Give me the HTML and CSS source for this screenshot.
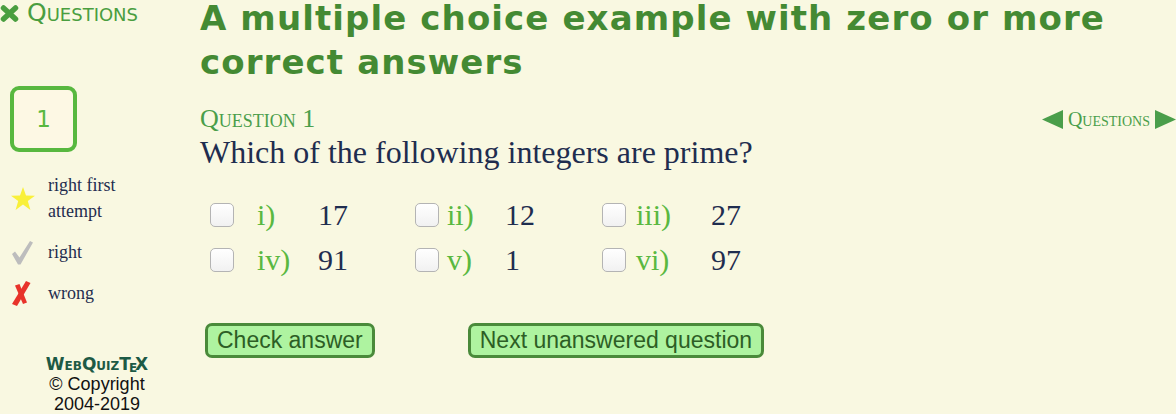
FILE: index.html
```html
<!DOCTYPE html>
<html lang="en">
<head>
<meta charset="UTF-8">
<meta name="viewport" content="width=device-width, initial-scale=1.0">
<title>A multiple choice example</title>
<link rel="stylesheet" href="styles.css">
</head>
<body>

<div class="page">
    <div class="sidebar">
        <div class="side-title">
            <svg width="19" height="17" viewBox="0 0 19 17"><path d="M3.5 3 L15.5 14 M15.5 3 L3.5 14" stroke="#4a9e3f" stroke-width="5.5" stroke-linecap="round"/></svg>
            <span>Questions</span>
        </div>

        <div class="qbox">1</div>

        <div class="legend">
            <svg class="mark" width="24" height="23" viewBox="0 0 24 23">
                <polygon points="12,0 15,8.5 24,8.7 16.8,14 19.4,23 12,17.6 4.6,23 7.2,14 0,8.7 9,8.5" fill="#f9f03a"/>
            </svg>
            <span class="legend-text">right first attempt</span>
            <svg class="mark" width="22" height="25" viewBox="0 0 22 25">
                <path d="M1 14 L4 11.5 L8.5 17.5 L19 1 L22 2.5 L9.5 24.5 L7 24.5 Z" fill="#bdbdbd"/>
            </svg>
            <span class="legend-text">right</span>
            <svg class="mark" width="20" height="25" viewBox="0 0 20 25">
                <path d="M15 0 L19.5 2 L6 25 L1 23 Z" fill="#e8332a"/>
                <path d="M4 4.5 L8.5 3 L16 21.5 L12 23 Z" fill="#e8332a"/>
            </svg>
            <span class="legend-text">wrong</span>
        </div>

        <div class="footer">
            <div class="brand">WebQuizT<span class="tex-e">e</span>X</div>
            <div>&copy; Copyright</div>
            <div>2004-2019</div>
        </div>
    </div>

    <div class="main">
        <h1>A multiple choice example with zero or more correct answers</h1>

        <div class="question-head">
            <span class="question-no">Question 1</span>
            <span class="question-nav">
                <svg width="21" height="19" viewBox="0 0 21 19"><polygon points="0,9.5 21,0 21,19" fill="#4a9e4a"/></svg>
                <span class="nav-text">Questions</span>
                <svg width="21" height="19" viewBox="0 0 21 19"><polygon points="21,9.5 0,0 0,19" fill="#4a9e4a"/></svg>
            </span>
        </div>
        <p class="question-text">Which of the following integers are prime?</p>

        <div class="choices">
            <input type="checkbox"><span class="lbl">i)</span><span class="num">17</span>
            <input type="checkbox"><span class="lbl">ii)</span><span class="num">12</span>
            <input type="checkbox"><span class="lbl">iii)</span><span class="num">27</span>
            <input type="checkbox"><span class="lbl">iv)</span><span class="num">91</span>
            <input type="checkbox"><span class="lbl">v)</span><span class="num">1</span>
            <input type="checkbox"><span class="lbl">vi)</span><span class="num">97</span>
        </div>

        <div class="buttons">
            <button class="btn">Check answer</button>
            <button class="btn">Next unanswered question</button>
        </div>
    </div>
</div>

</body>
</html>
```

FILE: styles.css
```css
body {
    margin: 0;
    padding: 0;
    background-color: #f9f8e1;
    font-family: "Liberation Serif", serif;
    color: #1f2d4f;
}
.page {
    display: flex;
}
.sidebar {
    width: 200px;
    flex-shrink: 0;
    display: flex;
    flex-direction: column;
}
.side-title {
    display: flex;
    align-items: center;
    gap: 8px;
    font-family: "DejaVu Sans", sans-serif;
    font-variant: small-caps;
    font-size: 25px;
    line-height: 26px;
    color: #4a9e3f;
    white-space: nowrap;
}
.qbox {
    width: 59px;
    height: 58px;
    margin: 60px 0 0 10px;
    border: 4px solid #58b83f;
    border-radius: 9px;
    background-color: #fdf8e4;
    color: #58b83f;
    font-family: "DejaVu Sans", sans-serif;
    font-size: 23px;
    display: flex;
    justify-content: center;
    align-items: center;
}
.legend {
    display: grid;
    grid-template-columns: 48px 90px;
    row-gap: 15px;
    align-items: center;
    margin-top: 20px;
    font-size: 18px;
    line-height: 26px;
}
.mark {
    justify-self: start;
    margin-left: 11px;
}
.footer {
    margin-top: 48px;
    width: 194px;
    text-align: center;
    font-family: "Liberation Sans", sans-serif;
    font-size: 18px;
    line-height: 20px;
    color: #111;
}
.brand {
    font-family: "DejaVu Sans", sans-serif;
    font-weight: bold;
    font-variant: small-caps;
    font-size: 17px;
    color: #1d5a45;
}
.tex-e {
    position: relative;
    top: 2px;
    margin: 0 -2px;
}
.main {
    flex: 1;
}
h1 {
    margin: -4px 0 0;
    font-family: "DejaVu Sans", sans-serif;
    font-weight: bold;
    font-size: 34px;
    line-height: 44px;
    letter-spacing: 1.1px;
    color: #448a33;
}
.question-head {
    display: flex;
    justify-content: space-between;
    align-items: center;
    margin-top: 20px;
    color: #4a9e4a;
}
.question-no {
    font-variant: small-caps;
    font-size: 26px;
    line-height: 30px;
}
.question-nav {
    display: flex;
    align-items: center;
    gap: 5px;
    font-variant: small-caps;
    font-size: 20px;
}
.question-text {
    margin: 0;
    font-size: 32px;
    line-height: 36px;
}
.choices {
    display: grid;
    grid-template-columns: 47px 61px 97px 32px 58px 97px 34px 75px auto;
    grid-auto-rows: 45px;
    align-items: center;
    margin: 22px 0 0 10px;
    font-size: 30px;
}
.choices input {
    appearance: none;
    margin: 0;
    width: 24px;
    height: 24px;
    border: 1px solid #b4b4b4;
    border-radius: 5px;
    background: linear-gradient(#ffffff, #f1f1f1);
}
.lbl {
    color: #5ab840;
}
.num {
    color: #1f2d4f;
}
.buttons {
    display: flex;
    gap: 93px;
    margin: 41px 0 0 5px;
}
.btn {
    font-family: "Liberation Sans", sans-serif;
    font-size: 23px;
    line-height: 25px;
    padding: 2px 9px;
    border: 3px solid #4a8a3a;
    border-radius: 7px;
    background-color: #aef3a0;
    color: #2d5e25;
}
```
